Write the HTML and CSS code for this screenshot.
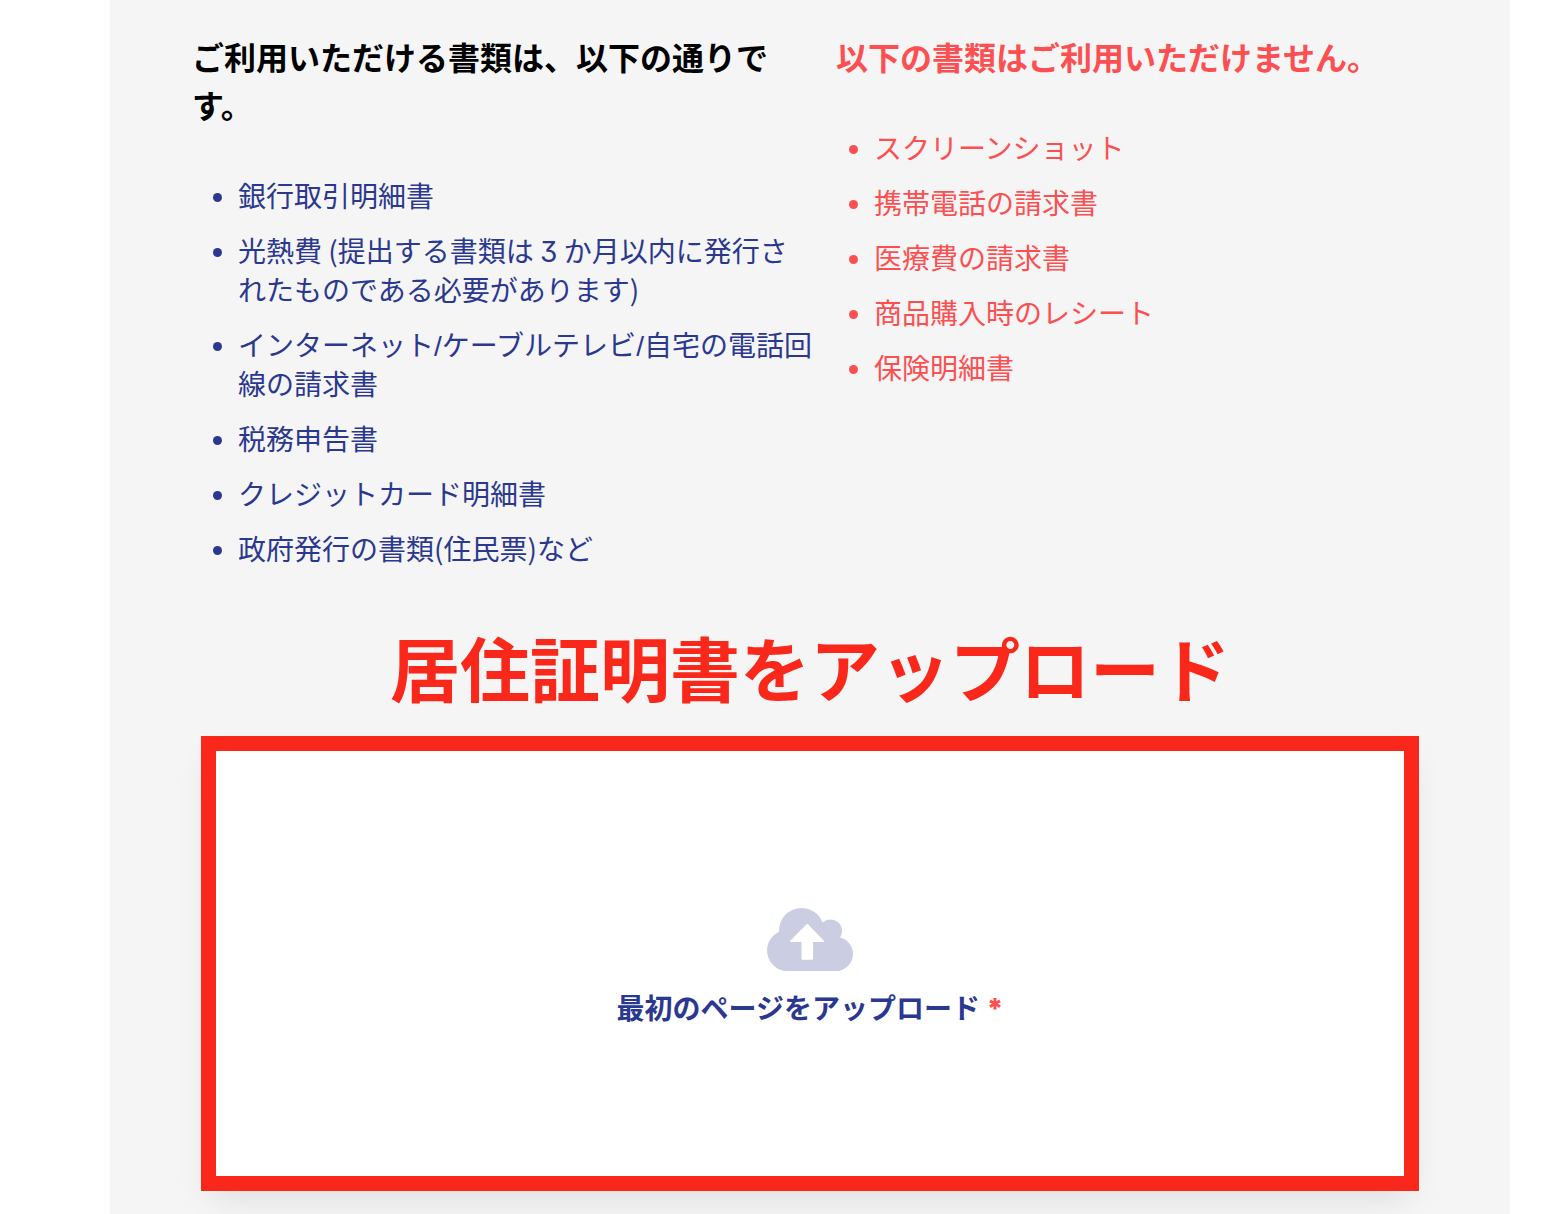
FILE: index.html
```html
<!DOCTYPE html>
<html lang="ja">
<head>
<meta charset="utf-8">
<meta name="viewport" content="width=device-width, initial-scale=1">
<title>居住証明書をアップロード</title>
<link rel="stylesheet" href="styles.css">
</head>
<body>
<main class="panel">
  <div class="documents">
    <section class="accepted">
      <h2 class="heading">ご利用いただける書類は、以下の通りです。</h2>
      <ul class="list">
        <li>銀行取引明細書</li>
        <li>光熱費 (提出する書類は <span class="digit">3</span> か月以内に発行されたものである必要があります)</li>
        <li>インターネット<span class="slash">/</span>ケーブルテレビ<span class="slash">/</span>自宅の電話回線の請求書</li>
        <li>税務申告書</li>
        <li>クレジットカード明細書</li>
        <li>政府発行の書類(住民票)など</li>
      </ul>
    </section>
    <section class="rejected">
      <h2 class="heading">以下の書類はご利用いただけません。</h2>
      <ul class="list">
        <li>スクリーンショット</li>
        <li>携帯電話の請求書</li>
        <li>医療費の請求書</li>
        <li>商品購入時のレシート</li>
        <li>保険明細書</li>
      </ul>
    </section>
  </div>
  <h1 class="title">居住証明書をアップロード</h1>
  <button class="upload" type="button">
    <svg class="cloud" viewBox="27 18 86 63" aria-hidden="true">
      <g fill="#cbcde3">
        <circle cx="47.500" cy="60.500" r="20.500"/>
        <circle cx="61.500" cy="40.500" r="22.500"/>
        <circle cx="90.500" cy="41" r="11.500"/>
        <circle cx="96" cy="64" r="17"/>
        <path d="M47 44H90L100 50V81H47Z"/>
      </g>
      <path d="M67.300 34.500 83.300 51.300H72.300V69H62.300V51.300H50.800Z" fill="#fff" stroke="#fff" stroke-width="1.500" stroke-linejoin="round"/>
    </svg>
    <span class="upload-label">最初のページをアップロード <span class="required">*</span></span>
  </button>
</main>
</body>
</html>
```

FILE: styles.css
```css
* {
  box-sizing: border-box;
}

body {
  margin: 0;
  background: #fff;
  color: #000;
  font-family: "Noto Sans CJK JP", sans-serif;
}

.panel {
  min-height: 100vh;
  margin: 0 50px 0 110px;
  padding: 32px 0 23px;
  background: #f5f5f5;
}

.documents {
  display: grid;
  grid-template-columns: 1fr 1fr;
  gap: 20px;
  padding: 0 50px 0 82px;
}

.heading {
  margin: 0;
  font-size: 32px;
  line-height: 48px;
  font-weight: 700;
}

.list {
  display: flex;
  flex-direction: column;
  gap: 16px;
  margin: 48px 0 0;
  padding: 0 2px 0 46px;
  list-style: none;
  font-size: 28px;
  line-height: 39px;
}

.list li {
  position: relative;
}

.list li::before {
  content: "";
  position: absolute;
  top: 17px;
  left: -25px;
  width: 9px;
  height: 9px;
  border-radius: 50%;
  background: currentColor;
}

.accepted .list {
  color: #2b388f;
}

.rejected {
  color: #fc4f51;
}

.rejected .list {
  padding-left: 38px;
}

.digit {
  font-family: Inter, sans-serif;
  font-feature-settings: "cv09";
  line-height: 1;
}

.slash {
  font-family: "Liberation Sans", sans-serif;
  line-height: 1;
}

.title {
  margin: 47px 0 17px;
  color: #f9281a;
  font-size: 70px;
  line-height: 104px;
  font-weight: 700;
  text-align: center;
}

.upload {
  display: flex;
  flex-direction: column;
  align-items: center;
  justify-content: center;
  gap: 16px;
  width: calc(100% - 182px);
  min-height: 455px;
  margin: 0 91px;
  padding: 7px 0 0;
  border: 15px solid #f9281a;
  background: #fff;
  box-shadow: 0 16px 32px -10px rgba(0, 0, 0, 0.1);
  color: #2b388f;
  font-family: inherit;
  font-size: 28px;
  line-height: 40px;
  font-weight: 700;
  cursor: pointer;
}

.cloud {
  width: 86px;
  height: 63px;
}

.required {
  color: #fc4f51;
  font-family: Inter, sans-serif;
  font-weight: 900;
  line-height: 1;
}
```
